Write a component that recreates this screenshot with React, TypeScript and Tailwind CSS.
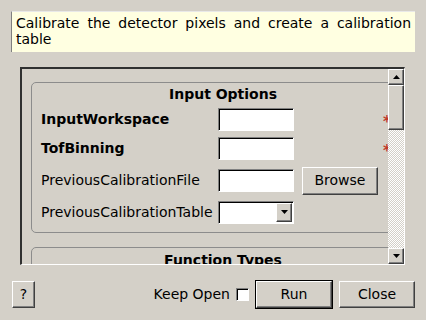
import React from "react";

const raised =
  "border border-t-white border-l-white border-r-[#404040] border-b-[#404040] shadow-[inset_-1px_-1px_0_#808080] bg-[#d4d0c8]";
const sunken =
  "border border-t-[#808080] border-l-[#808080] border-r-white border-b-white shadow-[inset_1px_1px_0_#000] bg-white";

function Arrow({ up }: { up?: boolean }) {
  return (
    <svg width="7" height="4" viewBox="0 0 7 4">
      <polygon points={up ? "3.5,0 7,4 0,4" : "0,0 7,0 3.5,4"} fill="#000" />
    </svg>
  );
}

function ScrollButton({ up }: { up?: boolean }) {
  return (
    <div className={`${raised} w-[16px] h-[16px] flex items-center justify-center`}>
      <Arrow up={up} />
    </div>
  );
}

function Field() {
  return <div className={`${sunken} w-[76px] h-[23px]`} />;
}

function Row({
  label,
  bold,
  children,
  className,
}: {
  label: string;
  bold?: boolean;
  children: React.ReactNode;
  className?: string;
}) {
  return (
    <div className={`flex items-center ${className ?? ""}`}>
      <span className={`w-[177px] whitespace-nowrap ${bold ? "font-bold" : ""}`}>{label}</span>
      {children}
    </div>
  );
}

export default function App() {
  return (
    <div className="w-[426px] h-[320px] bg-[#d4d0c8] text-[14px] text-black font-['DejaVu_Sans',sans-serif] flex flex-col pt-[11px] overflow-hidden">
      {/* description */}
      <div className="ml-[11px] w-[404px] h-[41px] bg-[#ffffe1] border-l border-t border-l-[#808080] border-t-[#e8e8e8] pl-[4px] pr-[4px] pt-[3px] leading-[16px] text-justify">
        Calibrate the detector pixels and create a calibration table
      </div>

      {/* scroll area */}
      <div className="ml-[20px] mt-[15px] w-[385px] h-[198px] border-t-2 border-l-2 border-t-[#303030] border-l-[#303030] border-r border-b border-r-white border-b-white flex">
        <div className="flex-1 overflow-hidden pl-[9px] pt-[13px]">
          <div className="w-[384px] border border-[#8c8c8c] rounded-[5px] pl-[9px] pb-[7px]">
            <div className="h-[23px] flex items-center justify-center font-bold pr-[9px]">
              Input Options
            </div>
            <Row label="InputWorkspace" bold className="h-[26px]">
              <Field />
              <span className="ml-[89px] mt-[6px] text-[#c0392b] font-bold text-[15px] leading-none">*</span>
            </Row>
            <Row label="TofBinning" bold className="h-[26px] mt-[3px]">
              <Field />
              <span className="ml-[89px] mt-[6px] text-[#c0392b] font-bold text-[15px] leading-none">*</span>
            </Row>
            <Row label="PreviousCalibrationFile" className="h-[33px] mt-[3px]">
              <Field />
              <button className={`${raised} ml-[8px] w-[76px] h-[28px]`}>Browse</button>
            </Row>
            <Row label="PreviousCalibrationTable" className="h-[26px] mt-[2px]">
              <div className={`${sunken} w-[76px] h-[23px] flex justify-end items-center pr-[1px]`}>
                <div className={`${raised} w-[16px] h-[19px] flex items-center justify-center`}>
                  <Arrow />
                </div>
              </div>
            </Row>
          </div>
          <div className="w-[384px] mt-[14px] border border-[#8c8c8c] rounded-[5px] h-[60px]">
            <div className="h-[23px] flex items-center justify-center font-bold pt-[2px]">
              Function Types
            </div>
          </div>
        </div>

        {/* scrollbar */}
        <div className="w-[16px] flex flex-col">
          <ScrollButton up />
          <div className={`${raised} w-[16px] h-[45px]`} />
          <div className="flex-1 bg-[conic-gradient(#d4d0c8_25%,#fff_0_50%,#d4d0c8_0_75%,#fff_0)] bg-[length:2px_2px]" />
          <ScrollButton />
        </div>
      </div>

      {/* bottom bar */}
      <div className="mt-[15px] h-[29px] flex items-center">
        <button className={`${raised} ml-[12px] w-[23px] h-[27px]`}>?</button>
        <div className="flex-1" />
        <span>Keep Open</span>
        <div className={`${sunken} ml-[6px] w-[13px] h-[13px]`} />
        <div className="ml-[6px] border border-black">
          <button className={`${raised} w-[76px] h-[27px]`}>Run</button>
        </div>
        <button className={`${raised} ml-[6px] w-[76px] h-[27px] mr-[11px]`}>Close</button>
      </div>
    </div>
  );
}
